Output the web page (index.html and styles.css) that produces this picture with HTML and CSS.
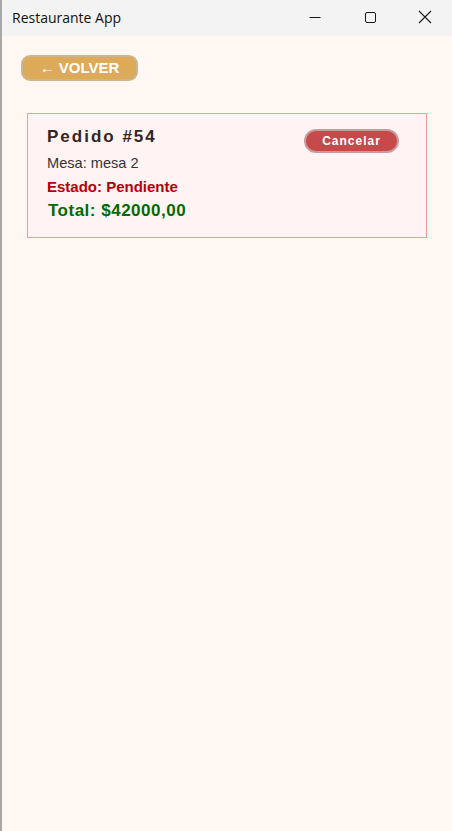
FILE: index.html
```html
<!DOCTYPE html>
<html>
<head>
<meta charset="utf-8">
<link rel="stylesheet" href="styles.css">
</head>
<body>
<div class="window">
  <div class="titlebar">
    <span class="title">Restaurante App</span>
    <div class="controls">
      <span class="ctl"><svg width="12" height="12" viewBox="0 0 12 12"><path d="M0.5 6.5H11.5" stroke="#1a1a1a" stroke-width="1"/></svg></span>
      <span class="ctl"><svg width="12" height="12" viewBox="0 0 12 12"><rect x="1.5" y="1.5" width="10" height="10" rx="1.5" fill="none" stroke="#1a1a1a" stroke-width="1"/></svg></span>
      <span class="ctl"><svg width="14" height="14" viewBox="0 0 14 14"><path d="M1 1L13 13M13 1L1 13" stroke="#1a1a1a" stroke-width="1.1"/></svg></span>
    </div>
  </div>
  <div class="content">
    <button class="back">&larr; VOLVER</button>
    <div class="card">
      <div class="card-main">
        <div class="order-title">Pedido #54</div>
        <div class="mesa">Mesa: mesa 2</div>
        <div class="estado">Estado: Pendiente</div>
        <div class="total">Total: $42000,00</div>
      </div>
      <button class="cancel">Cancelar</button>
    </div>
  </div>
</div>
</body>
</html>
```
FILE: styles.css
```css
html, body {
  margin: 0;
  padding: 0;
  height: 100%;
}
body {
  background: #2a2a2a;
  font-family: "Liberation Sans", Arial, sans-serif;
}
.window {
  height: 100%;
  display: flex;
  flex-direction: column;
  background: #fff7f1;
  border-left: 2px solid #a8a8a8;
  box-sizing: border-box;
}
.titlebar {
  height: 36px;
  flex: 0 0 36px;
  background: #f3f3f3;
  display: flex;
  align-items: center;
  justify-content: space-between;
  padding-left: 10px;
}
.title {
  font-family: "Open Sans", "Noto Sans", sans-serif;
  font-size: 14px;
  color: #111;
  margin-top: -1px;
}
.controls {
  display: flex;
  height: 100%;
}
.ctl {
  width: 55px;
  display: flex;
  align-items: center;
  justify-content: center;
  margin-top: -2px;
}
.content {
  padding: 19px 0 0 19px;
  display: flex;
  flex-direction: column;
  align-items: flex-start;
}
.back {
  width: 117px;
  height: 26px;
  background: #dcaa58;
  border: 2px solid #cdb58e;
  border-radius: 9px;
  color: #fff;
  font-family: "Liberation Sans", Arial, sans-serif;
  font-weight: bold;
  font-size: 15px;
  padding: 0;
  line-height: 20px;
}
.card {
  margin: 32px 0 0 6px;
  width: 400px;
  box-sizing: border-box;
  border: 1px solid #f39a9a;
  background: #fff4f3;
  padding: 13px 27px 16px 19px;
  display: flex;
  justify-content: space-between;
  align-items: flex-start;
}
.order-title {
  font-size: 17px;
  font-weight: bold;
  color: #33261f;
  letter-spacing: 2px;
  line-height: 20px;
}
.mesa {
  font-size: 14.6px;
  color: #333;
  margin-top: 7px;
  line-height: 18px;
}
.estado {
  font-size: 15px;
  font-weight: bold;
  color: #b3000a;
  margin-top: 6px;
  line-height: 18px;
}
.total {
  font-size: 17px;
  font-weight: bold;
  color: #006b00;
  letter-spacing: 0.5px;
  margin-top: 5px;
  margin-left: 1px;
  line-height: 20px;
}
.cancel {
  margin-top: 2px;
  width: 95px;
  height: 24px;
  background: #c8494a;
  border: 2px solid #c99b9b;
  border-radius: 12px;
  color: #fff;
  font-family: "Liberation Sans", Arial, sans-serif;
  font-weight: bold;
  font-size: 12px;
  letter-spacing: 1px;
  padding: 0;
}
```
